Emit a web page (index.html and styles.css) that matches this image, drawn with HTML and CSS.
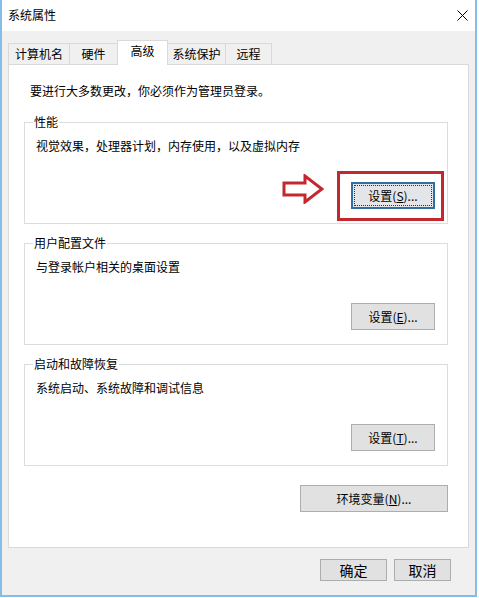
FILE: index.html
```html
<!DOCTYPE html>
<html lang="zh-CN">

<head>
    <meta charset="utf-8">
    <meta name="viewport" content="width=device-width, initial-scale=1.0">
    <title>系统属性</title>
    <link rel="stylesheet" href="styles.css">
</head>

<body>
    <div class="window">
        <header class="titlebar">
            <span class="title">系统属性</span>
            <button class="close" aria-label="关闭">
                <svg width="11" height="11" viewBox="0 0 11 11">
                    <path d="M0.5 0.5 L10.5 10.5 M10.5 0.5 L0.5 10.5" stroke="#000" stroke-width="1" fill="none" />
                </svg>
            </button>
        </header>

        <div class="content">
            <nav class="tabs">
                <div class="tab tab-computer">计算机名</div>
                <div class="tab tab-hardware">硬件</div>
                <div class="tab tab-advanced active">高级</div>
                <div class="tab tab-protect">系统保护</div>
                <div class="tab tab-remote">远程</div>
            </nav>

            <section class="panel">
                <p class="intro">要进行大多数更改，你必须作为管理员登录。</p>

                <fieldset class="group">
                    <legend>性能</legend>
                    <p class="desc">视觉效果，处理器计划，内存使用，以及虚拟内存</p>
                    <div class="actions">
                        <svg class="arrow" width="42" height="30" viewBox="0 0 42 30">
                            <path d="M2 9 H23 V2 L40 15 L23 28 V21 H2 Z" fill="#fff" stroke="#c4282e" stroke-width="3" stroke-linejoin="miter" />
                        </svg>
                        <button class="btn focused">设置(<u>S</u>)...</button>
                        <div class="highlight"></div>
                    </div>
                </fieldset>

                <fieldset class="group">
                    <legend>用户配置文件</legend>
                    <p class="desc">与登录帐户相关的桌面设置</p>
                    <div class="actions">
                        <button class="btn">设置(<u>E</u>)...</button>
                    </div>
                </fieldset>

                <fieldset class="group">
                    <legend>启动和故障恢复</legend>
                    <p class="desc">系统启动、系统故障和调试信息</p>
                    <div class="actions">
                        <button class="btn">设置(<u>T</u>)...</button>
                    </div>
                </fieldset>

                <div class="env">
                    <button class="btn btn-wide">环境变量(<u>N</u>)...</button>
                </div>
            </section>

            <footer class="footer">
                <button class="btn btn-dialog btn-ok">确定</button>
                <button class="btn btn-dialog btn-cancel">取消</button>
            </footer>
        </div>
    </div>
</body>

</html>
```

FILE: styles.css
```css
* {
    box-sizing: border-box;
}

body {
    margin: 0;
    background: #fff;
    font-family: "Microsoft YaHei UI", "Noto Sans CJK SC", sans-serif;
    font-size: 12px;
    line-height: 16px;
    color: #000;
}

p {
    margin: 0;
}

.window {
    width: 477px;
    height: 597px;
    border: 2px solid #85bde6;
    border-top: none;
    display: flex;
    flex-direction: column;
}

.titlebar {
    height: 31px;
    background: #fff;
    display: flex;
    align-items: center;
    justify-content: space-between;
    padding: 0 0 1px 6px;
}

.close {
    border: none;
    background: none;
    padding: 0;
    width: 11px;
    height: 30px;
    margin-right: 7px;
    display: flex;
    align-items: center;
    justify-content: center;
}

.content {
    flex: 1;
    background: #f0f0f0;
    padding: 9px 6px 0 6px;
}

/* tab strip */
.tabs {
    display: flex;
    align-items: flex-end;
    height: 24px;
    position: relative;
    z-index: 1;
}

.tab {
    height: 21px;
    border: 1px solid #d9d9d9;
    border-bottom: none;
    background: #f0f0f0;
    text-align: center;
    line-height: 19px;
    margin-left: -1px;
}

.tab:first-child {
    margin-left: 0;
}

.tab-computer {
    width: 62px;
}

.tab-hardware {
    width: 49px;
}

.tab-advanced {
    width: 51px;
}

.tab-protect {
    width: 59px;
}

.tab-remote {
    width: 47px;
}

.tab.active {
    height: 25px;
    margin-bottom: -1px;
    background: #fff;
    line-height: 20px;
}

/* tab page */
.panel {
    height: 484px;
    background: #fff;
    border: 1px solid #d9d9d9;
    padding: 18px 20px 0 15px;
}

.intro {
    padding-left: 6px;
}

.group {
    margin: 15px 0 0 0;
    padding: 8px 12px 14px 8px;
    border: 1px solid #dcdcdc;
    min-width: 0;
}

.group + .group {
    margin-top: 11px;
}

.group legend {
    padding: 0 1px;
}

.desc {
    padding-left: 3px;
}

.actions {
    margin-top: 28px;
    display: flex;
    justify-content: flex-end;
    position: relative;
}

.btn {
    font-family: inherit;
    font-size: 12px;
    color: #000;
    width: 84px;
    height: 27px;
    padding: 0;
    background: #e1e1e1;
    border: 1px solid #adadad;
}

.btn.focused {
    border: 2px solid #2f6fa3;
    outline: 1px dotted #333;
    outline-offset: -4px;
    background: #e3e5e8;
}

/* red callout around the performance button */
.highlight {
    position: absolute;
    right: -9px;
    top: -11px;
    width: 107px;
    height: 50px;
    border: 3px solid #c4282e;
}

.arrow {
    position: absolute;
    right: 111px;
    top: -8px;
}

.env {
    margin-top: 19px;
    display: flex;
    justify-content: flex-end;
}

.btn-wide {
    width: 148px;
}

.footer {
    display: flex;
    justify-content: flex-end;
    gap: 7px;
    padding: 11px 18px 0 0;
}

.btn-dialog {
    height: 22px;
    font-size: 14px;
}

.btn-ok {
    width: 67px;
}

.btn-cancel {
    width: 57px;
}
```
